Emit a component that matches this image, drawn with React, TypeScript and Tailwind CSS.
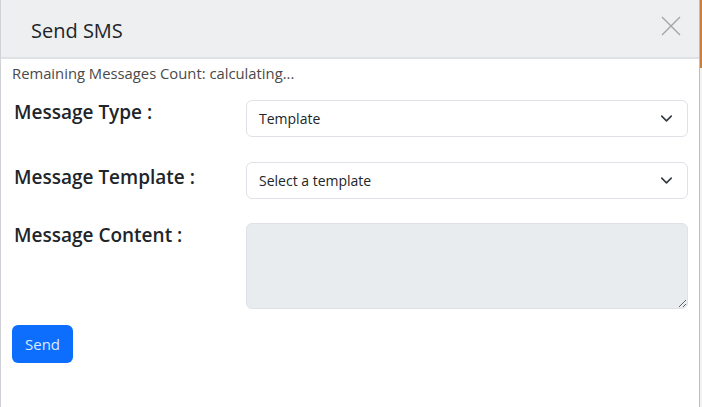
import { ChevronDown } from 'lucide-react'

const font = { fontFamily: '"Open Sans", "Noto Sans", sans-serif' }

function SelectBox({ value }: { value: string }) {
  return (
    <div className="box-border flex h-[37px] min-w-0 flex-1 items-center justify-between rounded-[6px] border border-[#dee2e6] bg-white pl-[12px] pr-[11px] text-[14px] text-[#212529]">
      <span>{value}</span>
      <ChevronDown size={19} strokeWidth={2} className="text-[#343a40]" />
    </div>
  )
}

export default function App() {
  return (
    <div className="flex h-[407px] w-[702px] bg-white" style={font}>
      <div className="flex h-full w-[700px] flex-col border-l border-[#cfd2d6] border-r border-r-[#bdbdbd]">
        {/* Header */}
        <header className="flex h-[59px] shrink-0 items-center justify-between border-b-2 border-[#dfe1e4] bg-[#eeeff1] pl-[30px] pr-[18px]">
          <h2 className="pt-[5px] text-[20px] font-normal leading-none text-[#212529]">Send SMS</h2>
          <button type="button" aria-label="Close" className="mb-[6px]">
            <svg width="20" height="20" viewBox="0 0 20 20" fill="none" stroke="#a3a3a3" strokeWidth="1.3">
              <path d="M1 1 19 19M19 1 1 19" />
            </svg>
          </button>
        </header>

        {/* Body */}
        <div className="flex flex-1 flex-col px-[11px] pt-[5px]">
          <p className="text-[14.8px] leading-[18px] text-[#4a4a4a]">
            Remaining Messages Count: calculating...
          </p>

          <div className="mt-[18px] flex">
            <label className="w-[234px] shrink-0 pl-[2px] text-[19px] font-semibold leading-[24px] text-[#212529]">
              Message Type :
            </label>
            <SelectBox value="Template" />
          </div>

          <div className="mt-[25px] flex">
            <label className="w-[234px] shrink-0 pl-[2px] pt-[3px] text-[19px] font-semibold leading-[24px] text-[#212529]">
              Message Template :
            </label>
            <SelectBox value="Select a template" />
          </div>

          <div className="mt-[24px] flex">
            <label className="w-[234px] shrink-0 pl-[2px] text-[19px] font-semibold leading-[24px] text-[#212529]">
              Message Content :
            </label>
            <textarea
              disabled
              className="box-border h-[86px] min-w-0 flex-1 rounded-[6px] border border-[#dee2e6] bg-[#e9ecef]"
            />
          </div>

          <div className="mt-[16px]">
            <button
              type="button"
              className="h-[38px] w-[61px] rounded-[6px] bg-[#0d6efd] text-[15px] text-[#dce9ff]"
            >
              Send
            </button>
          </div>
        </div>
      </div>
      <div className="flex w-[2px] flex-col">
        <div className="h-[68px] bg-[#c8803e]" />
        <div className="flex-1 bg-[#f2f2f2]" />
      </div>
    </div>
  )
}
